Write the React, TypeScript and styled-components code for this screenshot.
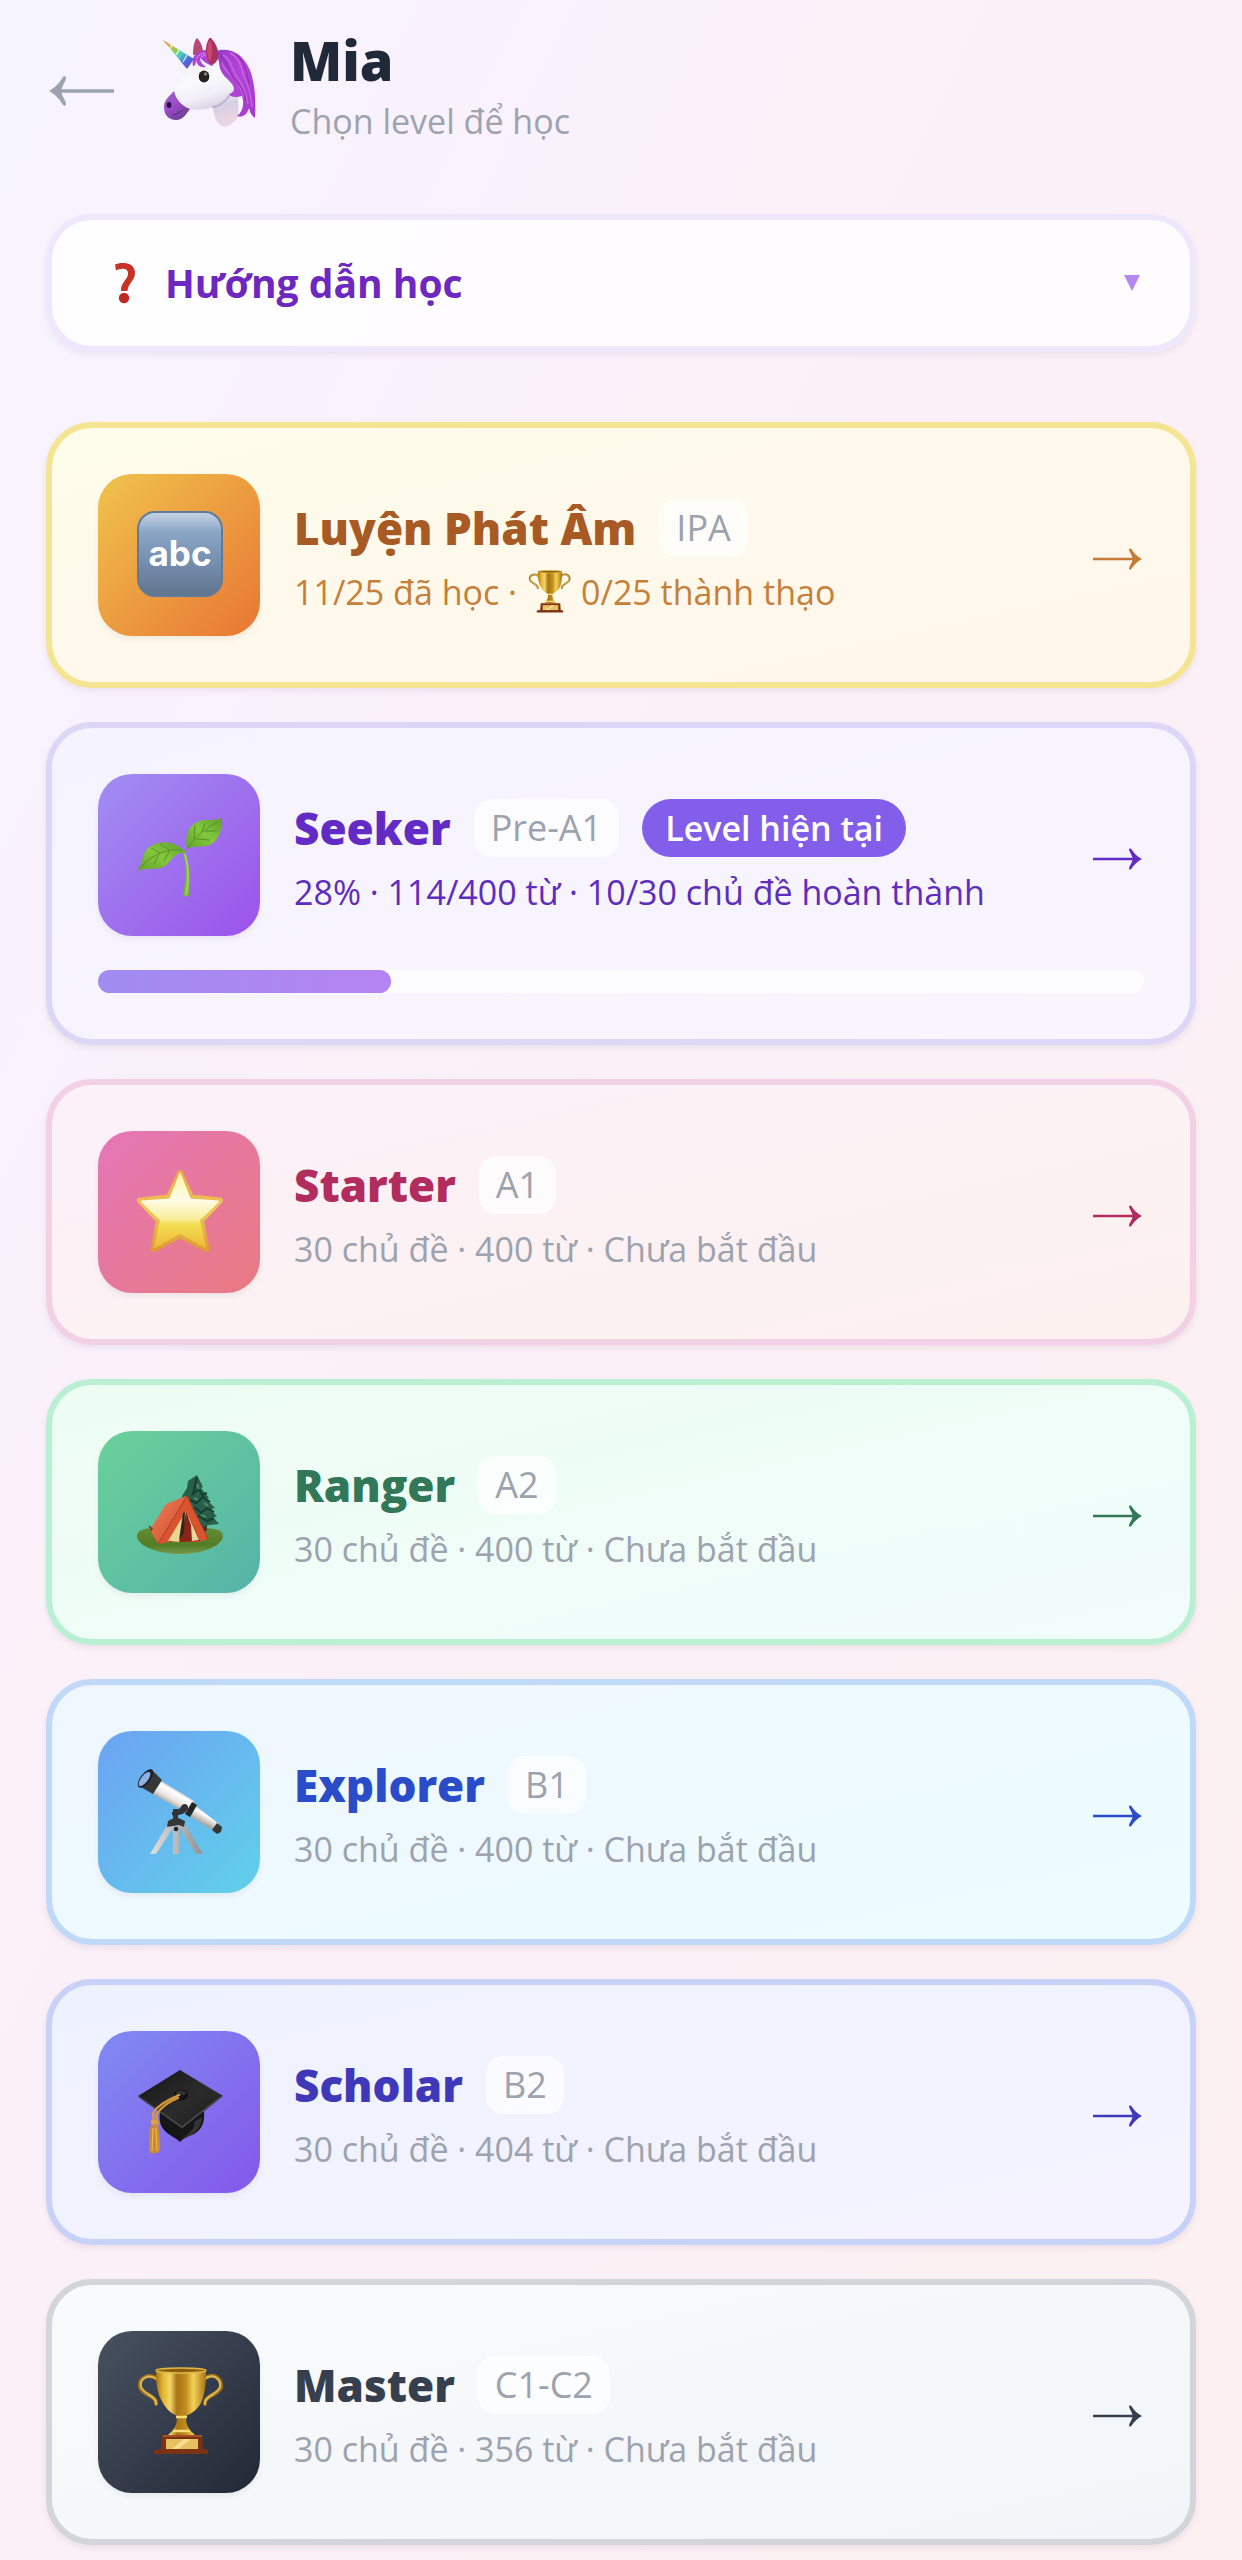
import React, { useState } from "react";
import styled, { createGlobalStyle } from "styled-components";

const GlobalStyle = createGlobalStyle`
  *, *::before, *::after { box-sizing: border-box; }
  body {
    margin: 0;
    font-family: "Open Sans", "Noto Sans", sans-serif;
    color: #1f2937;
  }
  h1, h2, p { margin: 0; }
  button { font-family: inherit; }
  svg { display: block; }
`;

const Page = styled.main`
  min-height: 100vh;
  padding: 22px 46px 12px;
  background: linear-gradient(to bottom right, #f6f5ff 0%, #f9f2fc 18%, #fbf0f7 50%, #fcf0f1 100%);
`;

const Header = styled.header`
  display: flex;
  align-items: center;
  gap: 34px;
  margin-bottom: 70px;
`;

const BackButton = styled.button`
  padding: 0;
  border: 0;
  background: none;
  color: #9ca3af;
  cursor: pointer;
`;

const ProfileName = styled.h1`
  font-size: 54px;
  line-height: 76px;
  font-weight: 800;
`;

const Muted = styled.p`
  font-size: 34px;
  line-height: 46px;
  color: #9ca3af;
`;

const GuideButton = styled.button`
  display: flex;
  align-items: center;
  gap: 29px;
  width: 100%;
  height: 138px;
  margin-bottom: 70px;
  padding: 0 50px 0 62px;
  border: 6px solid #efe7fb;
  border-radius: 46px;
  background: rgba(255, 255, 255, 0.8);
  box-shadow: 0 3px 6px rgba(60, 30, 90, 0.07);
  color: #6d28bf;
  font-size: 39px;
  line-height: 56px;
  font-weight: 700;
  text-align: left;
  cursor: pointer;
`;

const GuideLabel = styled.span`
  flex: 1;
`;

const LevelList = styled.nav`
  display: flex;
  flex-direction: column;
  gap: 34px;
`;

const Card = styled.a<{ $border: string; $from: string; $to: string }>`
  display: flex;
  flex-direction: column;
  gap: 34px;
  padding: 46px;
  border: 6px solid ${(p) => p.$border};
  border-radius: 46px;
  background: linear-gradient(to bottom right, ${(p) => p.$from}, ${(p) => p.$to});
  box-shadow: 0 3px 6px rgba(60, 30, 60, 0.08);
  color: inherit;
  text-decoration: none;
`;

const CardRow = styled.div`
  display: flex;
  align-items: center;
  gap: 34px;
`;

const Tile = styled.div<{ $from: string; $to: string }>`
  display: grid;
  place-items: center;
  flex: none;
  width: 162px;
  height: 162px;
  border-radius: 34px;
  background: linear-gradient(135deg, ${(p) => p.$from}, ${(p) => p.$to});
  box-shadow: 0 3px 6px rgba(0, 0, 0, 0.06);
`;

const CardText = styled.div`
  flex: 1;
  min-width: 0;
  padding-top: 6px;
`;

const TitleRow = styled.div`
  display: flex;
  align-items: center;
  gap: 23px;
  margin-bottom: 10px;
`;

const Title = styled.h2<{ $color: string }>`
  font-size: 44px;
  line-height: 58px;
  font-weight: 800;
  color: ${(p) => p.$color};
`;

const Chip = styled.span`
  padding: 6px 17px;
  border-radius: 17px;
  background: rgba(255, 255, 255, 0.7);
  color: #9ca3af;
  font-size: 36px;
  line-height: 46px;
`;

const CurrentBadge = styled.span`
  padding: 6px 23px;
  border-radius: 29px;
  background: #835eea;
  color: #ffffff;
  font-size: 34px;
  line-height: 46px;
  font-weight: 600;
`;

const Status = styled.p<{ $color: string; $active?: boolean }>`
  display: flex;
  align-items: center;
  gap: 10px;
  font-size: 34px;
  line-height: 50px;
  font-weight: ${(p) => (p.$active ? 500 : 400)};
  color: ${(p) => p.$color};
`;

const Track = styled.div`
  height: 23px;
  border-radius: 12px;
  background: rgba(255, 255, 255, 0.7);
`;

const Fill = styled.div`
  height: 100%;
  border-radius: 12px;
  background: linear-gradient(90deg, #a08cf0, #b583f3);
`;

const ForwardArrow = ({ color }: { color: string }) => (
  <svg width="52" height="30" viewBox="0 0 52 30" fill={color} aria-hidden="true">
    <path d="M1 17.8h39.5c-1-3.700-3.500-6.200-3.500-8.200 0-1.500 1.700-1.600 2.500-.4 2.300 3.800 5.700 7.300 10.500 9.800-4.800 2.500-8.200 6-10.500 9.800-.8 1.200-2.500 1.100-2.500-.4 0-2 2.500-4.500 3.500-8.200H1z" />
  </svg>
);

const BackArrow = () => (
  <svg width="82" height="52" viewBox="0 -3 82 52" fill="currentColor" aria-hidden="true">
    <path d="M68 32.700H15.500c1.500 5 4.500 8.500 4.500 11.300 0 2-2.200 2.200-3.300.5C13.700 39.500 9.500 34.500 3 31c6.500-3.500 10.700-8.500 13.700-13.500 1.100-1.700 3.300-1.500 3.300.5 0 2.800-3 6.300-4.500 11.300H68z" />
  </svg>
);

const QuestionIcon = () => (
  <svg width="22" height="42" viewBox="0 0 22 42" aria-hidden="true">
    <path d="M1 2.500C6 .2 21 -.8 21 11c0 8-7 10-7.500 18H7c-.5-9 7-11 7-17.500C14 5.500 6.500 6 2 8.500z" fill="#c93327" />
    <circle cx="10" cy="36" r="5.200" fill="#c02a24" />
  </svg>
);

const Unicorn = () => (
  <svg width="94" height="90" viewBox="0 0 94 90" aria-hidden="true">
    <defs>
      <linearGradient id="horn" x1="0" y1="0" x2="1" y2="1">
        <stop offset="0" stopColor="#d9553f" />
        <stop offset=".2" stopColor="#edb14c" />
        <stop offset=".38" stopColor="#8bcf58" />
        <stop offset=".55" stopColor="#4bc9c6" />
        <stop offset=".72" stopColor="#4870dc" />
        <stop offset="1" stopColor="#8237bd" />
      </linearGradient>
      <linearGradient id="face" x1=".3" y1="0" x2=".6" y2="1">
        <stop offset="0" stopColor="#ebe9f1" />
        <stop offset=".4" stopColor="#fafafd" />
        <stop offset=".62" stopColor="#f0eef7" />
        <stop offset=".8" stopColor="#d6cfe3" />
        <stop offset="1" stopColor="#ecd5e2" />
      </linearGradient>
      <linearGradient id="mane" x1="0" y1="0" x2="1" y2="1">
        <stop offset="0" stopColor="#9839c5" />
        <stop offset=".45" stopColor="#b445d8" />
        <stop offset="1" stopColor="#a63ace" />
      </linearGradient>
      <linearGradient id="snout" x1="0" y1="0" x2=".6" y2="1">
        <stop offset="0" stopColor="#8f6cb8" />
        <stop offset=".5" stopColor="#a04bcd" />
        <stop offset="1" stopColor="#6f4094" />
      </linearGradient>
    </defs>
    <path d="M31 17c0-8 1-14 4-17 4 4 6 9 6 16z" fill="#b54a76" />
    <path d="M25 30C31 18 42 11 54 14c12 4 18 14 18 27 4 8 5 24 4 38-5 7-12 12-18 8-5-4-6-11-7-18-8 3-16 3-23 2-4 5-7 10-14 11-7 0-12-5-12-13s6-11 10-16c3-9 8-16 13-23z" fill="url(#face)" />
    <path d="M12 53C8 58 2 61 2 69s5 13 12 13 10-6 14-11c-8-3-14-9-16-18z" fill="url(#snout)" />
    <path d="M51 69c6-1 12-5 16-11" fill="none" stroke="#b9b1cf" strokeWidth="2" strokeLinecap="round" />
    <ellipse cx="7" cy="67" rx="2.300" ry="3" fill="#2b0a46" />
    <path d="M10 77c4 0 8-3 11-5" fill="none" stroke="#5f2f86" strokeWidth="1" />
    <path d="M1 2l31 19-7 10z" fill="url(#horn)" />
    <path d="M10 7l-2 4M17 12l-3 5M25 17l-4 7" stroke="#fff" strokeOpacity=".7" strokeWidth="1.500" />
    <path d="M54 13c16-5 28 5 34 19 5 14 6 30 5 48-3-2-5-5-6-10-2 7-7 10-12 8 7-5 7-14 5-20-6 2-12 1-13-2 6-2 6-6 3-10-4-6-12-8-13-22z" fill="url(#mane)" />
    <path d="M31 28c-2-10 4-16 14-16 6 0 10 3 11 9l-6 7c-5-2-9-5-12-8 0 4 3 7 6 9-6 1-9-2-10-7 0 4-1 6-3 6z" fill="url(#mane)" />
    <path d="M34 21c2-4 6-6 10-6M39 20c1-2 3-3 5-3" fill="none" stroke="#cd6ee8" strokeWidth="1.300" />
    <path d="M61 17c10 6 8 15 14 22s9 16 11 27M68 15c12 6 11 18 15 26s6 16 7 28M60 25c2 9 11 12 15 19 4 6 6 10 7 15" fill="none" stroke="#c962e4" strokeWidth="1.500" />
    <path d="M58 18c9 7 7 14 13 21s11 12 13 24M74 16c9 8 11 19 13 30" fill="none" stroke="#8a30b0" strokeWidth="1.200" />
    <path d="M48-1c6 6 9 13 8 20-1 5-4 8-8 7-5-8-6-18 0-27z" fill="#a8335e" />
    <path d="M48 1c3 7 3 15 0 23-4-7-4-15 0-23z" fill="#c8486f" />
    <ellipse cx="42" cy="38.500" rx="5.300" ry="6" fill="#24231f" />
    <circle cx="43.500" cy="36" r="1.700" fill="#898981" />
  </svg>
);

const AbcIcon = () => (
  <svg width="90" height="90" viewBox="-2 -2 90 90" aria-hidden="true">
    <defs>
      <linearGradient id="abc" x1="0" y1="0" x2="0" y2="1">
        <stop offset="0" stopColor="#c8d5e4" />
        <stop offset=".24" stopColor="#8aa5c6" />
        <stop offset=".55" stopColor="#7792b3" />
        <stop offset="1" stopColor="#61748d" />
      </linearGradient>
    </defs>
    <rect x="2" y="0" width="84" height="84" rx="17" fill="url(#abc)" stroke="#607a9b" strokeWidth="2" />
    <text x="44" y="54" textAnchor="middle" fontFamily="Inter, Liberation Sans, sans-serif" fontWeight="700" fontSize="35" fill="#fff">abc</text>
  </svg>
);

const SproutIcon = () => (
  <svg width="90" height="90" viewBox="-2 -2 90 90" aria-hidden="true">
    <defs>
      <linearGradient id="leaf" x1="0" y1="1" x2="1" y2="0">
        <stop offset="0" stopColor="#63a12b" />
        <stop offset=".5" stopColor="#83c83b" />
        <stop offset="1" stopColor="#5f9f2c" />
      </linearGradient>
    </defs>
    <path d="M48 37c5 13 7 29 5 46-1 2-5 2-6 0 3-16 4-30-1-44z" fill="#78b832" />
    <path d="M49 42c4 13 4 27 1 41" fill="none" stroke="#a8dc5d" strokeWidth="1.500" />
    <path d="M51 37c-3-14 2-24 12-28 8-2 16 0 23-3 0 12-3 22-12 27-8 3-16 0-23 4z" fill="url(#leaf)" />
    <path d="M49 40C40 29 23 27 12 36 5 43 8 50 1 59c9-4 20 0 28-5 8-7 9-13 20-14z" fill="url(#leaf)" />
    <path d="M51 37c8-12 17-20 31-27M58 27l1-14M66 20l3-9M60 27l14 1M69 19l12 0" fill="none" stroke="#55952a" strokeWidth="1" />
    <path d="M46 38C30 36 16 43 4 56M34 38l-10-6M24 41l-9-5M34 38l-6 11M23 42l-5 10" fill="none" stroke="#55952a" strokeWidth="1" />
  </svg>
);

const StarIcon = () => (
  <svg width="90" height="90" viewBox="-2 -2 90 90" aria-hidden="true">
    <defs>
      <linearGradient id="starOuter" x1="0" y1="0" x2="0" y2="1">
        <stop offset="0" stopColor="#eda84b" />
        <stop offset=".5" stopColor="#edc556" />
        <stop offset="1" stopColor="#dd9c34" />
      </linearGradient>
      <linearGradient id="starInner" x1="0" y1="0" x2="0" y2="1">
        <stop offset="0" stopColor="#fff6a8" />
        <stop offset=".35" stopColor="#fffde8" />
        <stop offset=".6" stopColor="#f8eda0" />
        <stop offset=".7" stopColor="#f2dd50" />
        <stop offset="1" stopColor="#f0b73a" />
      </linearGradient>
    </defs>
    <path d="M44 4L55 28.500 84 31.500 65 51.500 70.500 80 44 66 17.500 80 23 51.500 4 31.500 33 28.500z" fill="url(#starOuter)" stroke="url(#starOuter)" strokeWidth="6" strokeLinejoin="round" />
    <path d="M44 5L54 30.500 82 32.500 63 51 69 78 44 64 19 78 25 51 6 32.500 34 30.500z" fill="url(#starInner)" stroke="url(#starInner)" strokeWidth="2" strokeLinejoin="round" />
  </svg>
);

const CampIcon = () => (
  <svg width="90" height="90" viewBox="-2 -2 90 90" aria-hidden="true">
    <defs>
      <linearGradient id="ground" x1="0" y1="0" x2="0" y2="1">
        <stop offset="0" stopColor="#688b36" />
        <stop offset=".65" stopColor="#517d25" />
        <stop offset="1" stopColor="#77984a" />
      </linearGradient>
      <linearGradient id="tent" x1="0" y1="0" x2="1" y2="1">
        <stop offset="0" stopColor="#f08058" />
        <stop offset="1" stopColor="#cf492c" />
      </linearGradient>
    </defs>
    <path d="M1 67c0-7 12-9 26-8h39c13 0 21 2 21 8 0 9-19 18-43 18S1 76 1 67z" fill="url(#ground)" />
    <path d="M66 51h5v11h-5z" fill="#4b3424" />
    <path d="M61 6l6 12-2 1 8 10-3 1 9 9-4 1 6 8-4 0 6 7-10 1-5 2-8-4-8 1-5-12-3-1 3-9-1-6 5-8 1-7z" fill="#285f49" />
    <path d="M61 8l-4 17 6-5 3 6 5-2M54 31l6 3 7-6 7 5M53 41l7-2 5 5 6-5 7 4M57 51l6-4 8 5 7-3" fill="none" stroke="#163e30" strokeWidth="2" />
    <path d="M61 15l2 5M58 29l4 2M68 34l4 3M65 46l5 2" stroke="#4e896e" strokeWidth="2" />
    <path d="M30 35l20-8 1 5-29 43-8-14z" fill="url(#tent)" />
    <path d="M51 27l21 43-10 3H34l-12 2z" fill="#d9532f" />
    <path d="M50 42l14 30-18 1H33z" fill="#8b2418" />
    <path d="M50 42l-3 17-4 14-11-1z" fill="#ecd590" />
    <path d="M50 42l5 14 1 16 7-1z" fill="#efd798" />
    <path d="M47 44l2-1-1 21-5 7z" fill="#292a1b" />
    <path d="M51 27L22 75M51 27l21 43" fill="none" stroke="#ac3e28" strokeWidth="1" />
    <path d="M13 57l3 3-1 2" fill="none" stroke="#654322" strokeWidth="1.500" />
  </svg>
);

const TelescopeIcon = () => (
  <svg width="90" height="90" viewBox="-2 -2 90 90" aria-hidden="true">
    <defs>
      <linearGradient id="tube" gradientUnits="userSpaceOnUse" x1="45" y1="22" x2="35" y2="39">
        <stop offset="0" stopColor="#c7c4c0" />
        <stop offset=".22" stopColor="#ffffff" />
        <stop offset=".6" stopColor="#e8e5e0" />
        <stop offset="1" stopColor="#8f8b87" />
      </linearGradient>
      <linearGradient id="tubeEnd" gradientUnits="userSpaceOnUse" x1="72" y1="43" x2="66" y2="54">
        <stop offset="0" stopColor="#d5d2ce" />
        <stop offset=".3" stopColor="#ffffff" />
        <stop offset="1" stopColor="#aaa6a1" />
      </linearGradient>
      <linearGradient id="leg" x1="0" y1="0" x2="1" y2="0">
        <stop offset="0" stopColor="#dfdfdf" />
        <stop offset="1" stopColor="#8f9395" />
      </linearGradient>
    </defs>
    <path d="M32 55l6 3-18 27h-6zM37 56h6v29h-6zM43 58l6-3 18 30h-7z" fill="url(#leg)" />
    <path d="M32 52l8-4 9 4-1 6-5-2-6 1-6 1zM37 40h5v12h-5z" fill="#343638" />
    <circle cx="40" cy="60" r="2.300" fill="#232527" />
    <path d="M22 10l36 22-7 12-36-20z" fill="url(#tube)" />
    <path d="M60 37l23 18-5 7-23-14z" fill="url(#tubeEnd)" />
    <path d="M15 0l11 11-9 14L3 17z" fill="#373737" />
    <ellipse cx="9.500" cy="9.500" rx="5" ry="11" transform="rotate(37 9.500 9.500)" fill="#1d2230" />
    <ellipse cx="8.500" cy="10" rx="3.400" ry="8.500" transform="rotate(37 8.500 10)" fill="#8fb2e4" />
    <path d="M56 33l5 3-7 12-5-3z" fill="#262626" />
    <path d="M81 54l5 4-1 5-4 2-5-4z" fill="#343638" />
    <path d="M36 43c4-2 7-1 10-7 4-3 7 1 6 4-3 6-12 7-16 6z" fill="#303236" />
  </svg>
);

const GraduationIcon = () => (
  <svg width="90" height="90" viewBox="-2 -2 90 90" aria-hidden="true">
    <defs>
      <linearGradient id="board" x1="0" y1="0" x2="1" y2="1">
        <stop offset="0" stopColor="#161616" />
        <stop offset=".55" stopColor="#2b2b2b" />
        <stop offset="1" stopColor="#1a1a1a" />
      </linearGradient>
    </defs>
    <path d="M24 43l44 0c1 11-3 18-10 22-7 3-12 5-14 8-4-4-10-6-15-11-5-5-6-11-5-19z" fill="#161617" />
    <path d="M58 53c2 5-5 12-13 17 11-4 21-9 21-22z" fill="#343436" />
    <path d="M44 1l43 26-41 33L2 27z" fill="url(#board)" />
    <path d="M3 28l43 30 40-31" fill="none" stroke="#4c4c4c" strokeWidth="1.500" />
    <ellipse cx="45" cy="26" rx="7" ry="5.500" fill="#121212" />
    <ellipse cx="45" cy="24" rx="5" ry="2.500" fill="#303030" />
    <path d="M43 26C31 31 22 36 17 44l1 12M42 29C32 33 25 38 20 46l2 9" fill="none" stroke="#d69a3a" strokeWidth="2.300" strokeLinecap="round" />
    <ellipse cx="18" cy="53" rx="3.500" ry="2.500" fill="#dda144" />
    <path d="M15 56h7c1 7 3 15 2 26-3 3-8 3-11 1 0-11 0-20 2-27z" fill="#c98a30" />
    <path d="M17 59l-1 23M20 59l1 23" stroke="#e8b55a" strokeWidth="1.200" />
  </svg>
);

const TrophyIcon = ({ size = 90 }: { size?: number }) => (
  <svg width={size} height={size} viewBox="-2 -2 90 90" aria-hidden="true">
    <defs>
      <linearGradient id="gold" x1="0" y1="0" x2="1" y2="0">
        <stop offset="0" stopColor="#a77616" />
        <stop offset=".15" stopColor="#e5b833" />
        <stop offset=".28" stopColor="#f4d568" />
        <stop offset=".42" stopColor="#a97415" />
        <stop offset=".6" stopColor="#c28d1c" />
        <stop offset=".75" stopColor="#f3d257" />
        <stop offset="1" stopColor="#a87315" />
      </linearGradient>
    </defs>
    <path d="M21 10C12 3 2 10 4 18c3 9 17 8 16 17M68 10c9-7 18-1 17 8-3 9-17 8-16 17" fill="none" stroke="#9e711d" strokeWidth="4" strokeLinecap="round" />
    <path d="M21 10C12 4 3 10 5 18c3 8 16 9 15 17M68 10c9-6 17-1 16 8-3 8-16 9-15 17" fill="none" stroke="#dfbd55" strokeWidth="2" strokeLinecap="round" />
    <path d="M20 1h50c0 13-1 25-5 33-4 7-9 10-15 13 0 8 1 12 9 19H32c8-7 9-11 9-19-6-3-10-6-14-13-6-9-7-20-7-33z" fill="url(#gold)" />
    <ellipse cx="45" cy="1.500" rx="25" ry="2.500" fill="#8c5d12" stroke="#dfb842" strokeWidth="1.500" />
    <path d="M40 48h11M37 62h17" stroke="#f8df77" strokeWidth="2.500" />
    <path d="M26 66h40l1 14 5 1v4H18v-4l7-1z" fill="#7b3314" />
    <path d="M27 67h39" stroke="#b35a31" strokeWidth="1.500" />
    <path d="M30 70h32v10H30z" fill="#e8c160" />
    <path d="M36 80l12-10h7L42 80z" fill="#f6df91" />
  </svg>
);

interface Level {
  name: string;
  code: string;
  status: string;
  mastered?: string;
  progress?: number;
  icon: React.ReactNode;
  border: string;
  bg: [string, string];
  tile: [string, string];
  color: string;
  statusColor?: string;
  arrow?: string;
}

const levels: Level[] = [
  { name: "Luyện Phát Âm", code: "IPA", status: "11/25 đã học ·", mastered: "0/25 thành thạo", icon: <AbcIcon />, border: "#f5e593", bg: ["#fefcea", "#fff6ec"], tile: ["#f0c34c", "#e87634"], color: "#a85a24", statusColor: "#c6803a", arrow: "#c47c36" },
  { name: "Seeker", code: "Pre-A1", status: "28% · 114/400 từ · 10/30 chủ đề hoàn thành", progress: 28, icon: <SproutIcon />, border: "#dcd7f6", bg: ["#f5f3ff", "#f8f5fe"], tile: ["#a18ef2", "#9b53ea"], color: "#622bc6", statusColor: "#5e2dbd" },
  { name: "Starter", code: "A1", status: "30 chủ đề · 400 từ · Chưa bắt đầu", icon: <StarIcon />, border: "#f2d0e6", bg: ["#fbf1f8", "#fdf1ef"], tile: ["#e476b8", "#e97a80"], color: "#b02d5e" },
  { name: "Ranger", code: "A2", status: "30 chủ đề · 400 từ · Chưa bắt đầu", icon: <CampIcon />, border: "#b9f0d2", bg: ["#eefdf4", "#f1fcfb"], tile: ["#6ad19a", "#55b3a8"], color: "#327858" },
  { name: "Explorer", code: "B1", status: "30 chủ đề · 400 từ · Chưa bắt đầu", icon: <TelescopeIcon />, border: "#c1d9f8", bg: ["#eff6ff", "#edfdff"], tile: ["#6ca3f2", "#60d0ea"], color: "#2b4cc9" },
  { name: "Scholar", code: "B2", status: "30 chủ đề · 404 từ · Chưa bắt đầu", icon: <GraduationIcon />, border: "#c8d1f8", bg: ["#eef2ff", "#f5f3ff"], tile: ["#808af2", "#8458ea"], color: "#3f38b8" },
  { name: "Master", code: "C1-C2", status: "30 chủ đề · 356 từ · Chưa bắt đầu", icon: <TrophyIcon />, border: "#d2d6da", bg: ["#f9fafb", "#f1f5f9"], tile: ["#485160", "#212937"], color: "#363f4e" },
];

const LevelCard = ({ level }: { level: Level }) => {
  const current = level.progress !== undefined;
  return (
    <Card href={`#${level.code}`} $border={level.border} $from={level.bg[0]} $to={level.bg[1]}>
      <CardRow>
        <Tile $from={level.tile[0]} $to={level.tile[1]}>{level.icon}</Tile>
        <CardText>
          <TitleRow>
            <Title $color={level.color}>{level.name}</Title>
            <Chip>{level.code}</Chip>
            {current && <CurrentBadge>Level hiện tại</CurrentBadge>}
          </TitleRow>
          <Status $color={level.statusColor ?? "#9ca3af"} $active={!!level.statusColor}>
            {level.status}
            {level.mastered && (
              <>
                <TrophyIcon size={44} />
                {level.mastered}
              </>
            )}
          </Status>
        </CardText>
        <ForwardArrow color={level.arrow ?? level.color} />
      </CardRow>
      {current && (
        <Track role="progressbar" aria-label={level.name} aria-valuenow={level.progress} aria-valuemin={0} aria-valuemax={100}>
          <Fill style={{ width: `${level.progress}%` }} />
        </Track>
      )}
    </Card>
  );
};

export default function App() {
  const [open, setOpen] = useState(false);
  return (
    <>
      <GlobalStyle />
      <Page>
        <Header>
          <BackButton type="button" aria-label="Quay lại">
            <BackArrow />
          </BackButton>
          <Unicorn />
          <div>
            <ProfileName>Mia</ProfileName>
            <Muted>Chọn level để học</Muted>
          </div>
        </Header>
        <GuideButton type="button" aria-expanded={open} onClick={() => setOpen(!open)}>
          <QuestionIcon />
          <GuideLabel>Hướng dẫn học</GuideLabel>
          <svg width="16" height="16" viewBox="0 0 16 16" aria-hidden="true">
            <path d="M0 0h16L8 16z" fill="#b488f0" />
          </svg>
        </GuideButton>
        <LevelList aria-label="Level">
          {levels.map((level) => (
            <LevelCard key={level.name} level={level} />
          ))}
        </LevelList>
      </Page>
    </>
  );
}
